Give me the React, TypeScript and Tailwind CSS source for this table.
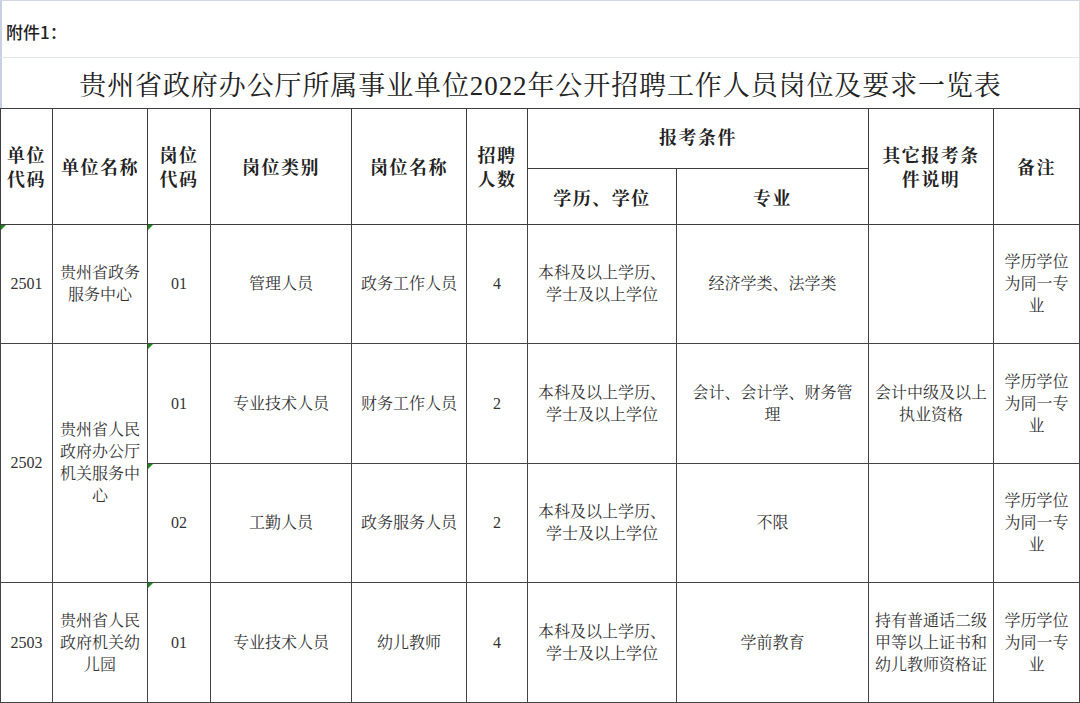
const serif = { fontFamily: '"Liberation Serif", "Noto Serif CJK SC", "Noto Sans CJK SC", serif' };

const cols = [52, 95, 63, 141, 115, 61, 149, 192, 125, 86];

function Lines({ lines }: { lines: string[] }) {
  return (
    <>
      {lines.map((l, i) => (
        <span key={i} className="block">
          {l}
        </span>
      ))}
    </>
  );
}

function Mark() {
  return (
    <span className="absolute left-0 top-0 h-0 w-0 border-t-[5px] border-r-[5px] border-t-[#1a8a1a] border-r-transparent" />
  );
}

const th = "border border-[#3c3c3c] text-center align-middle font-bold text-[18px] leading-[24px] tracking-[1.5px] text-[#222]";
const td = "relative border border-[#444] text-center align-middle text-[16px] leading-[22px] text-[#333] px-1";

type Row = {
  code?: { text: string; rows: number; mark?: boolean };
  name?: { lines: string[]; rows: number };
  post: string;
  kind: string;
  title: string;
  count: string;
  edu: string[];
  major: string[];
  other: string[];
  note: string[];
  h: string;
};

const edu = ["本科及以上学历、", "学士及以上学位"];
const note = ["学历学位", "为同一专", "业"];

const rows: Row[] = [
  {
    code: { text: "2501", rows: 1, mark: true },
    name: { lines: ["贵州省政务", "服务中心"], rows: 1 },
    post: "01",
    kind: "管理人员",
    title: "政务工作人员",
    count: "4",
    edu,
    major: ["经济学类、法学类"],
    other: [],
    note,
    h: "h-[119px]",
  },
  {
    code: { text: "2502", rows: 2 },
    name: { lines: ["贵州省人民", "政府办公厅", "机关服务中", "心"], rows: 2 },
    post: "01",
    kind: "专业技术人员",
    title: "财务工作人员",
    count: "2",
    edu,
    major: ["会计、会计学、财务管", "理"],
    other: ["会计中级及以上", "执业资格"],
    note,
    h: "h-[120px]",
  },
  {
    post: "02",
    kind: "工勤人员",
    title: "政务服务人员",
    count: "2",
    edu,
    major: ["不限"],
    other: [],
    note,
    h: "h-[119px]",
  },
  {
    code: { text: "2503", rows: 1 },
    name: { lines: ["贵州省人民", "政府机关幼", "儿园"], rows: 1 },
    post: "01",
    kind: "专业技术人员",
    title: "幼儿教师",
    count: "4",
    edu,
    major: ["学前教育"],
    other: ["持有普通话二级", "甲等以上证书和", "幼儿教师资格证"],
    note,
    h: "h-[120px]",
  },
];

export default function App() {
  return (
    <div className="h-[703px] w-[1080px] overflow-hidden bg-white" style={serif}>
      <div
        className="flex h-[58px] items-center border-t border-r border-b border-l-2 border-t-[#d3d8e6] border-r-[#d9dde5] border-b-[#e3e7ef] border-l-[#c9d0e3] pl-[4px] pt-[6px] text-[17px] font-medium text-[#222]"
        style={{ fontFamily: '"Noto Sans CJK SC", "Noto Sans", sans-serif' }}
      >
        附件1：
      </div>
      <div className="flex h-[50px] items-center justify-center border-r border-l-2 border-r-[#d9dde5] border-l-[#c9d0e3] pt-[6px] text-[27px] tracking-[0.9px] text-[#222]">
        贵州省政府办公厅所属事业单位2022年公开招聘工作人员岗位及要求一览表
      </div>
      <table className="w-[1079px] table-fixed border-collapse border border-[#333]">
        <colgroup>
          {cols.map((w, i) => (
            <col key={i} style={{ width: w }} />
          ))}
        </colgroup>
        <thead>
          <tr className="h-[60px]">
            <th rowSpan={2} className={th + " pt-[2px]"}>
              <Lines lines={["单位", "代码"]} />
            </th>
            <th rowSpan={2} className={th + " pt-[2px]"}>单位名称</th>
            <th rowSpan={2} className={th + " pt-[2px]"}>
              <Lines lines={["岗位", "代码"]} />
            </th>
            <th rowSpan={2} className={th + " pt-[2px]"}>岗位类别</th>
            <th rowSpan={2} className={th + " pt-[2px]"}>岗位名称</th>
            <th rowSpan={2} className={th + " pt-[2px]"}>
              <Lines lines={["招聘", "人数"]} />
            </th>
            <th colSpan={2} className={th + " pb-[1px]"}>报考条件</th>
            <th rowSpan={2} className={th + " pt-[2px]"}>
              <Lines lines={["其它报考条", "件说明"]} />
            </th>
            <th rowSpan={2} className={th + " pt-[2px]"}>备注</th>
          </tr>
          <tr className="h-[56px]">
            <th className={th + " pt-[4px]"}>学历、学位</th>
            <th className={th + " pt-[4px]"}>专业</th>
          </tr>
        </thead>
        <tbody>
          {rows.map((r, i) => (
            <tr key={i} className={r.h}>
              {r.code && (
                <td rowSpan={r.code.rows} className={td}>
                  {r.code.mark && <Mark />}
                  {r.code.text}
                </td>
              )}
              {r.name && (
                <td rowSpan={r.name.rows} className={td}>
                  <Lines lines={r.name.lines} />
                </td>
              )}
              <td className={td}>
                <Mark />
                {r.post}
              </td>
              <td className={td}>{r.kind}</td>
              <td className={td}>{r.title}</td>
              <td className={td}>{r.count}</td>
              <td className={td}>
                <Lines lines={r.edu} />
              </td>
              <td className={td}>
                <Lines lines={r.major} />
              </td>
              <td className={td + " !px-0"}>
                <Lines lines={r.other} />
              </td>
              <td className={td}>
                <Lines lines={r.note} />
              </td>
            </tr>
          ))}
        </tbody>
      </table>
    </div>
  );
}
